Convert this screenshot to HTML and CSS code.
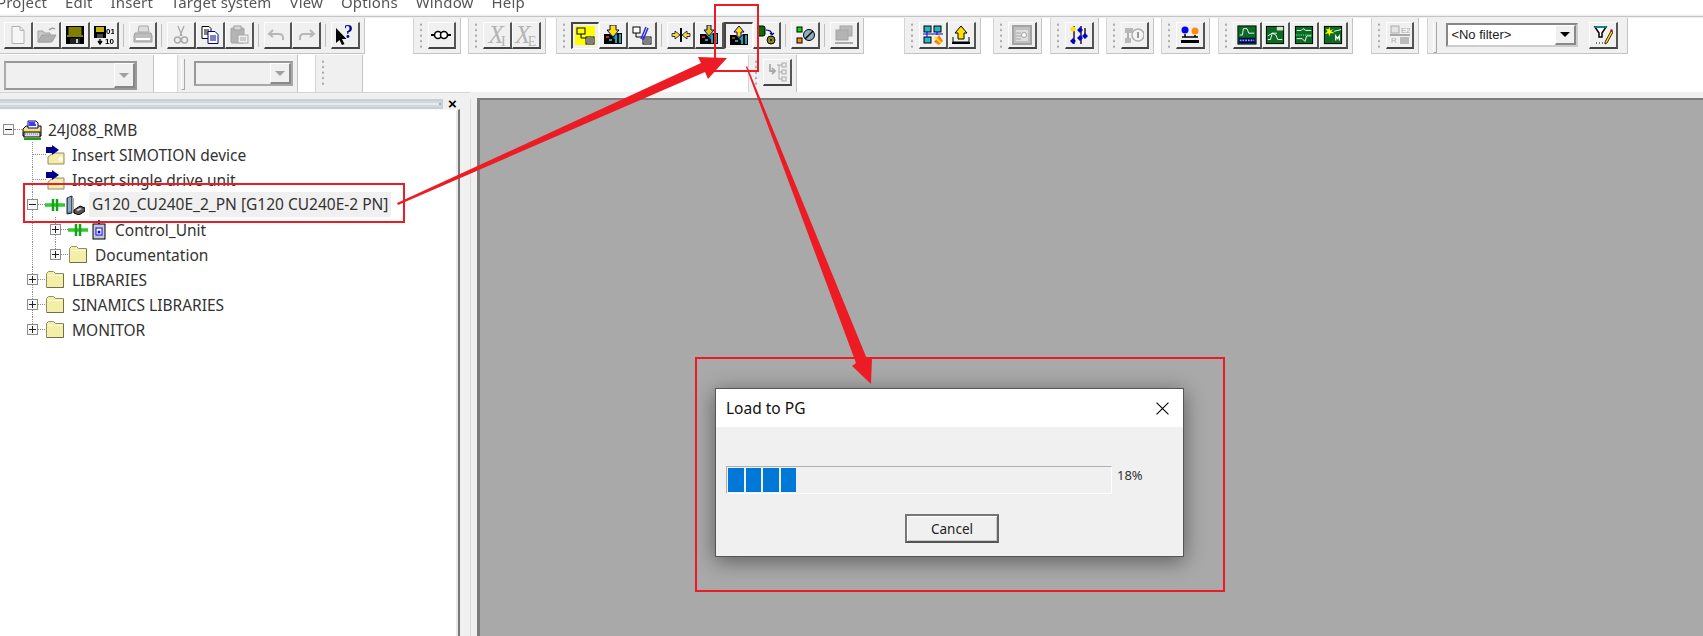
FILE: index.html
```html
<!DOCTYPE html>
<html lang="en">
<head>
<meta charset="utf-8">
<title>Load to PG</title>
<link rel="stylesheet" href="styles.css">
</head>
<body>
<svg class="defs" aria-hidden="true">
  <symbol id="device" viewBox="0 0 20 20">
    <path d="M1 9h6l3 3 3-3 1-1h5v11H1z" fill="#000"/>
    <path d="M10 13l4-4v9h-2v-4z" fill="#17a5b5"/>
    <rect x="12" y="10" width="2" height="8" fill="#17a5b5"/>
    <rect x="16" y="9" width="2" height="9" fill="#17a5b5"/>
    <rect x="3" y="11" width="3" height="2" fill="#c22"/>
    <rect x="6" y="14" width="3" height="2" fill="#17a5b5"/>
  </symbol>
  <symbol id="folder" viewBox="0 0 20 19">
    <path d="M1.500 17.500V3.500l2-2h5l2 2h8v14z" fill="#f5eea6" stroke="#8f8f68"/>
    <path d="M2.500 5.500h15" stroke="#fffbd8"/>
    <path d="M18.500 4v13.500H2" fill="none" stroke="#6e6e50"/>
  </symbol>
  <symbol id="insert" viewBox="0 0 20 20">
    <path d="M7 8h11v11H2V12z" fill="#f6ecaa" stroke="#8f8f68"/>
    <path d="M0 2h6V0l7 5-7 5V8H0z" fill="#00008b"/>
    <path d="M12 14l3-3 2 3-2 3z" fill="#fff"/>
  </symbol>
  <symbol id="link" viewBox="0 0 20 12">
    <path d="M0 6h20" stroke="#2ecb2e" stroke-width="3.500"/>
    <path d="M8 0v12M12 0v12" stroke="#16a016" stroke-width="2.500"/>
  </symbol>
  <symbol id="trend" viewBox="0 0 22 22">
    <rect x="1" y="1" width="20" height="20" fill="#000"/>
    <rect x="2" y="2" width="18" height="18" fill="#0a6b22"/>
  </symbol>
</svg>

<div class="app">
  <nav class="menu">
    <span class="menu-first">Project</span><span>Edit</span><span>Insert</span><span>Target system</span><span>View</span><span>Options</span><span>Window</span><span>Help</span>
  </nav>
  <div class="rule"></div>

  <div class="toolrow">
    <div class="tb tb-flush">
      <span class="btn"><svg class="ic" viewBox="0 0 20 20"><path d="M4 1.500h8l4 4v13H4z" fill="#f6f6f6" stroke="#b0b0b0"/><path d="M12 1.500v4h4" fill="none" stroke="#b0b0b0"/></svg></span>
      <span class="btn"><svg class="ic" viewBox="0 0 20 20"><path d="M1 17V6h5l1 2h6v9z" fill="#c9c9c9" stroke="#a2a2a2"/><path d="M1 17l4-7h14l-4 7z" fill="#b0b0b0" stroke="#a2a2a2"/><path d="M12 5q3-3 6-1" fill="none" stroke="#a2a2a2" stroke-width="1.400"/></svg></span>
      <span class="btn"><svg class="ic" viewBox="0 0 20 20"><rect x="1" y="1" width="18" height="18" fill="#000"/><rect x="3.500" y="2" width="13" height="8" fill="#808000"/><rect x="2" y="10" width="16" height="2" fill="#808000"/><rect x="5" y="13" width="10" height="6" fill="#222"/><rect x="11" y="14" width="2" height="4" fill="#ccc"/></svg></span>
      <span class="btn"><svg class="ic" viewBox="0 0 20 20"><rect x="0" y="1" width="12" height="12" fill="#000"/><rect x="2" y="2" width="8" height="5" fill="#c8b400"/><rect x="3" y="9" width="6" height="4" fill="#444"/><text x="12" y="9" class="digits">01</text><text x="11" y="19" class="digits">10</text><path d="M6 14v4M4 16l2 3 2-3" fill="none" stroke="#000" stroke-width="1.400"/></svg></span>
      <span class="sep"></span>
      <span class="btn"><svg class="ic" viewBox="0 0 20 20"><path d="M6 1h9l1 6H5z" fill="#ddd" stroke="#a8a8a8"/><path d="M2 8h16l1 3v6H1v-6z" fill="#bdbdbd" stroke="#a0a0a0"/><path d="M3 14h14" stroke="#fff" stroke-width="2"/></svg></span>
      <span class="sep"></span>
      <span class="btn"><svg class="ic" viewBox="0 0 20 20"><path d="M7 1l4 10M13 1L9 11" stroke="#aaa" stroke-width="1.300" fill="none"/><circle cx="6.500" cy="15" r="3" fill="none" stroke="#aaa" stroke-width="1.500"/><circle cx="13.500" cy="15" r="3" fill="none" stroke="#aaa" stroke-width="1.500"/></svg></span>
      <span class="btn"><svg class="ic" viewBox="0 0 20 20"><path d="M2 1.500h7l2 2v10H2z" fill="#fff" stroke="#000"/><path d="M4 5h5M4 7h5M4 9h5" stroke="#000"/><path d="M8 6.500h7l3 3v9H8z" fill="#fff" stroke="#00008b"/><path d="M10 11h6M10 13h6M10 15h6" stroke="#00008b" stroke-width="1.200"/></svg></span>
      <span class="btn"><svg class="ic" viewBox="0 0 20 20"><rect x="2" y="3" width="13" height="15" rx="1" fill="#b4b4b4" stroke="#a0a0a0"/><rect x="5" y="1" width="7" height="4" fill="#d8d8d8" stroke="#a0a0a0"/><rect x="9" y="10" width="10" height="8" fill="#eee" stroke="#a8a8a8"/><path d="M11 13h6M11 15h6" stroke="#aaa"/></svg></span>
      <span class="sep"></span>
      <span class="btn"><svg class="ic" viewBox="0 0 20 20"><path d="M6 5L2 9l4 3M3 9h9q4 0 4 4v2" fill="none" stroke="#b8b8b8" stroke-width="2"/></svg></span>
      <span class="btn"><svg class="ic" viewBox="0 0 20 20"><path d="M14 5l4 4-4 3M17 9H8q-4 0-4 4v2" fill="none" stroke="#b8b8b8" stroke-width="2"/></svg></span>
      <span class="sep"></span>
      <span class="btn"><svg class="ic" viewBox="0 0 20 20"><path d="M1 3v15l3.500-3 2.500 5 2.500-1-2.500-5h4.500z" fill="#000"/><text x="9" y="13" class="qmark">?</text></svg></span>
    </div>

    <div class="tb gap-48">
      <span class="grip"></span>
      <span class="btn"><svg class="ic" viewBox="0 0 20 20"><path d="M0 10h3M17 10h3" stroke="#000" stroke-width="2"/><circle cx="7" cy="10" r="3.500" fill="#fff" stroke="#000" stroke-width="1.600"/><circle cx="13" cy="10" r="3.500" fill="#fff" stroke="#000" stroke-width="1.600"/></svg></span>
    </div>

    <div class="tb gap-7">
      <span class="grip"></span>
      <span class="btn"><span class="xsym">X<sub>I</sub></span></span>
      <span class="btn"><span class="xsym">X<sub>E</sub></span></span>
    </div>

    <div class="tb gap-10">
      <span class="grip"></span>
      <span class="btn btn-down"><svg class="ic" viewBox="0 0 20 20"><rect width="20" height="19" fill="#ffff00"/><rect x="2" y="2" width="8" height="6" fill="#ffff00" stroke="#000"/><path d="M6 8v4h6" fill="none" stroke="#000"/><rect x="11" y="11" width="8" height="7" fill="#fff" stroke="#000"/><path d="M13 12v5M15 12v5M17 12v5" stroke="#000"/></svg></span>
      <span class="btn"><svg class="ic" viewBox="0 0 20 20"><use href="#device"/><path d="M7 0h6v5h3l-6 7-6-7h3z" fill="#ffe000" stroke="#00008b"/></svg></span>
      <span class="btn"><svg class="ic" viewBox="0 0 20 20"><rect x="1" y="2" width="7" height="6" fill="#fff" stroke="#000"/><path d="M4 8v4h6" stroke="#000" fill="none"/><rect x="11" y="12" width="8" height="7" fill="#fff" stroke="#000"/><path d="M13 13v5M15 13v5M17 13v5" stroke="#000"/><path d="M9 14L14 2M11 15L16 3" stroke="#2a2ae0" stroke-width="1.500"/></svg></span>
      <span class="sep"></span>
      <span class="btn"><svg class="ic" viewBox="0 0 20 20"><path d="M10 3v14" stroke="#000" stroke-width="2"/><path d="M1 8.500h3V6l5 4-5 4v-2.500H1zM19 8.500h-3V6l-5 4 5 4v-2.500h3z" fill="#ffe000" stroke="#00008b" stroke-width=".8"/></svg></span>
      <span class="btn"><svg class="ic" viewBox="0 0 20 20"><use href="#device"/><path d="M8 0h4v5h3l-5 6-5-6h3z" fill="#d8c800" stroke="#00008b"/></svg></span>
      <span class="btn btn-down"><svg class="ic" viewBox="0 0 20 20"><use href="#device"/><path d="M10 0l5 6h-3v5H8V6H5z" fill="#ffe000" stroke="#00008b"/></svg></span>
      <span class="btn"><svg class="ic" viewBox="0 0 20 20"><rect x="0" y="1" width="8" height="10" rx="2" fill="#0a6a0a" stroke="#000"/><path d="M9 5q5 0 6 4M13 8l2 2 2-2" fill="none" stroke="#00008b" stroke-width="1.200"/><circle cx="14" cy="15" r="4" fill="#8a8a10" stroke="#000"/><circle cx="14" cy="15" r="1" fill="#000"/></svg></span>
      <span class="sep"></span>
      <span class="btn"><svg class="ic" viewBox="0 0 20 20"><rect x="2" y="2" width="5" height="5" fill="#00e000" stroke="#000"/><rect x="2" y="13" width="5" height="5" fill="#ff8c10" stroke="#000"/><circle cx="14" cy="10" r="5.500" fill="#8db0c0" stroke="#000"/><path d="M10 14l8-8" stroke="#000" stroke-width="1.500"/></svg></span>
      <span class="sep"></span>
      <span class="btn"><svg class="ic" viewBox="0 0 20 20"><rect x="6" y="1" width="12" height="10" fill="#bbb" stroke="#a4a4a4"/><rect x="2" y="5" width="12" height="10" fill="#b4b4b4" stroke="#a4a4a4"/><path d="M1 18h18" stroke="#aaa" stroke-width="2"/></svg></span>
    </div>

    <div class="tb gap-40">
      <span class="grip"></span>
      <span class="btn"><svg class="ic" viewBox="0 0 20 20"><rect x="1" y="1" width="7" height="6" fill="#2ab5c5" stroke="#000"/><rect x="11" y="1" width="7" height="6" fill="#2ab5c5" stroke="#000"/><rect x="1" y="12" width="7" height="6" fill="#2ab5c5" stroke="#000"/><path d="M0 9h20M4 7v5M14 7v3" stroke="#0000e0"/><path d="M11 17l5-7 4 6-4 4z" fill="#ff7a10"/><path d="M12 12l6 6" stroke="#ffe000" stroke-width="2"/></svg></span>
      <span class="btn"><svg class="ic" viewBox="0 0 20 20"><path d="M2 12v5h16v-5" fill="#f0f0f0" stroke="#000"/><path d="M1 18h18" stroke="#000" stroke-width="2"/><path d="M10 1l6 7h-3v6H7V8H4z" fill="#ffe000" stroke="#000"/></svg></span>
    </div>

    <div class="tb gap-12">
      <span class="grip"></span>
      <span class="btn"><svg class="ic" viewBox="0 0 20 20"><rect x="1" y="1" width="18" height="18" fill="#c0c0c0" stroke="#a4a4a4" stroke-width="2"/><rect x="4" y="5" width="12" height="11" fill="#ddd"/><path d="M4 8h5M4 11h5M4 14h5" stroke="#aaa"/><circle cx="12" cy="10" r="2.500" fill="#fff" stroke="#a0a0a0"/></svg></span>
    </div>

    <div class="tb gap-8">
      <span class="grip"></span>
      <span class="btn"><svg class="ic" viewBox="0 0 20 20"><path d="M5 1v18M12 1v18" stroke="#000" stroke-width="1.300"/><path d="M16 3v9" stroke="#000" stroke-width="1.300"/><circle cx="4" cy="4" r="2.500" fill="#ffe000"/><path d="M11 2l3 3-3 3-3-3zM16 8l3 3-3 3-3-3zM11 10l3 3-3 3-3-3zM4 13l3 3-3 3-3-3z" fill="#0000d0"/></svg></span>
    </div>

    <div class="tb gap-7">
      <span class="grip"></span>
      <span class="btn"><svg class="ic" viewBox="0 0 20 20"><rect x="1" y="3" width="8" height="5" fill="#b8b8b8"/><rect x="1" y="13" width="6" height="5" fill="#b8b8b8"/><path d="M4 8v5" stroke="#b0b0b0" stroke-width="2"/><circle cx="14" cy="10" r="6" fill="#f4f4f4" stroke="#b0b0b0" stroke-width="1.500"/><path d="M14 7v6" stroke="#999" stroke-width="2"/></svg></span>
    </div>

    <div class="tb gap-7">
      <span class="grip"></span>
      <span class="btn"><svg class="ic" viewBox="0 0 20 20"><circle cx="5" cy="5" r="3.500" fill="#0000f0"/><circle cx="15" cy="6" r="3.500" fill="#ff8c10"/><path d="M5 9v3M15 10v2M2 12h16" stroke="#000" stroke-width="1.500"/><rect x="1" y="15" width="18" height="3" fill="#000"/></svg></span>
    </div>

    <div class="tb gap-8">
      <span class="grip"></span>
      <span class="btn"><svg class="ic" viewBox="0 0 22 22"><rect x="1" y="1" width="20" height="20" fill="#0a6b22" stroke="#000"/><rect x="2" y="14" width="18" height="6" fill="#000060"/><path d="M3 11h3l1-7h4l2 5h6" fill="none" stroke="#fff"/><path d="M3 17h16" stroke="#8ad" stroke-width="2" stroke-dasharray="2 1"/></svg></span>
      <span class="btn"><svg class="ic" viewBox="0 0 22 22"><use href="#trend"/><path d="M3 16h3l2-7 4 2 2 5h5M3 12l5-3h5" fill="none" stroke="#fff"/><rect x="13" y="2" width="7" height="4" fill="#ddd"/></svg></span>
      <span class="btn"><svg class="ic" viewBox="0 0 22 22"><use href="#trend"/><path d="M3 6h5l2-2 3 2h6M3 15h6l3 3 2-6h5" fill="none" stroke="#fff"/><path d="M2 11h18" stroke="#9fc" stroke-dasharray="1 1"/></svg></span>
      <span class="btn"><svg class="ic" viewBox="0 0 22 22"><use href="#trend"/><path d="M7 2l1 4 4-2-3 3 4 2-5 0-1 4-1-4-4 1 3-3-2-3 3 1z" fill="#ffff00"/><path d="M12 7l8-2" stroke="#fff"/><path d="M14 17v-5l2 3 2-3v5" fill="none" stroke="#fff" stroke-width="1.300"/></svg></span>
    </div>

    <div class="tb gap-18">
      <span class="grip"></span>
      <span class="btn"><svg class="ic" viewBox="0 0 20 20"><rect x="1" y="1" width="8" height="7" fill="#e4e4e4" stroke="#aaa"/><text x="11" y="8" class="fade">E2</text><path d="M0 10h20" stroke="#a8a8a8" stroke-width="2"/><text x="1" y="18" class="fade">R</text><rect x="10" y="12" width="9" height="7" fill="#bbb"/></svg></span>
    </div>

    <div class="tb tb-filter gap-8">
      <span class="bar"></span>
      <span class="combo combo-filter"><span class="combo-val">&lt;No filter&gt;</span><span class="combo-btn"><i class="arrow arrow-on"></i></span></span>
      <span class="btn"><svg class="ic" viewBox="0 0 20 20"><path d="M2 2h11L9 8v4H6V8z" fill="#fff" stroke="#000" stroke-width="1.500"/><path d="M2 2h11" stroke="#00a0a0" stroke-width="1.500"/><path d="M12 17l6-11 2 1-6 11-2 1z" fill="#ffd800" stroke="#000" stroke-width=".8"/><path d="M17 6l1-2 2 1-1 2z" fill="#d01010"/><path d="M3 18h1M6 18h1M9 18h1" stroke="#000"/></svg></span>
    </div>
  </div>

  <div class="toolrow">
    <div class="tb tb-flush tb-open tb-combo1"><span class="combo combo-a"><span class="combo-val"></span><span class="combo-btn"><i class="arrow"></i></span></span></div>
    <div class="tb tb-open tb-combo2 gap-23"><span class="bar"></span><span class="combo combo-b"><span class="combo-val"></span><span class="combo-btn"><i class="arrow"></i></span></span></div>
    <div class="tb tb-open tb-gripper gap-17"><span class="grip"></span></div>
    <div class="tb tb-open tb-tree gap-385"><span class="grip"></span><span class="btn"><svg class="ic" viewBox="0 0 20 20"><path d="M3 2v7h4M5 6l3 3-3 3" fill="none" stroke="#aaa" stroke-width="1.800"/><path d="M10 3h5M12 3v14M12 10h3M12 17h3" stroke="#aaa" fill="none"/><rect x="15" y="1" width="4" height="4" fill="#eee" stroke="#aaa"/><rect x="15" y="8" width="4" height="4" fill="#eee" stroke="#aaa"/><rect x="15" y="15" width="4" height="4" fill="#eee" stroke="#aaa"/></svg></span></div>
  </div>

  <div class="band"></div>

  <main class="main">
    <aside class="dock">
      <div class="dock-head"><span class="dock-bars"></span><span class="dock-x">×</span></div>
      <div class="tree">
        <div class="row lv-root">
          <span class="exp exp-open"></span><span class="dash dash-root"></span>
          <svg class="tree-ic" viewBox="0 0 20 20"><path d="M1 9l3-3h15v10H1z" fill="#f3e27a" stroke="#000"/><path d="M6 8V1h8l2 2v5z" fill="#fff" stroke="#00008b"/><path d="M7 3h6M7 5h7" stroke="#0000e0" stroke-width="1.300"/><rect x="2" y="12" width="16" height="5" fill="#ddd" stroke="#000"/><path d="M3 14h14" stroke="#777" stroke-dasharray="1 1"/><path d="M2 19h17" stroke="#18a018" stroke-width="2"/></svg>
          <span class="label">24J088_RMB</span>
        </div>
        <div class="row lv-1 guide-a">
          <span class="dash dash-item"></span>
          <svg class="tree-ic"><use href="#insert"/></svg>
          <span class="label">Insert SIMOTION device</span>
        </div>
        <div class="row lv-1 guide-a">
          <span class="dash dash-item"></span>
          <svg class="tree-ic"><use href="#insert"/></svg>
          <span class="label">Insert single drive unit</span>
        </div>
        <div class="row lv-1b guide-a">
          <span class="exp exp-open"></span><span class="dash dash-short"></span>
          <svg class="link-ic"><use href="#link"/></svg>
          <svg class="tree-ic" viewBox="0 0 20 20"><path d="M2 3l5-2v17l-5 1z" fill="#3f8f8f" stroke="#224"/><path d="M3 3l3-1v14l-3 1z" fill="#9ab"/><rect x="7" y="3" width="2" height="15" fill="#aaa"/><path d="M9 15l6-4 5 2v3l-6 4-5-2z" fill="#555" stroke="#000"/><path d="M11 15l4-2 2 1-4 2z" fill="#ddd"/></svg>
          <span class="label label-sel">G120_CU240E_2_PN [G120 CU240E-2 PN]</span>
        </div>
        <div class="row lv-2 guide-a guide-b">
          <span class="exp exp-plus"></span><span class="dash dash-mini"></span>
          <svg class="link-ic"><use href="#link"/></svg>
          <svg class="unit-ic" viewBox="0 0 14 20"><path d="M7 0v4" stroke="#444" stroke-width="2"/><rect x="1" y="4" width="12" height="15" fill="#c4c9d4" stroke="#000"/><rect x="4" y="8" width="6" height="7" fill="#fff" stroke="#00f"/><circle cx="7" cy="12" r="1.500" fill="#00f"/></svg>
          <span class="label label-unit">Control_Unit</span>
        </div>
        <div class="row lv-2 guide-a guide-b-end">
          <span class="exp exp-plus"></span><span class="dash dash-mini"></span>
          <svg class="folder-ic"><use href="#folder"/></svg>
          <span class="label label-doc">Documentation</span>
        </div>
        <div class="row lv-1b guide-a">
          <span class="exp exp-plus"></span><span class="dash dash-short"></span>
          <svg class="folder-ic"><use href="#folder"/></svg>
          <span class="label label-doc">LIBRARIES</span>
        </div>
        <div class="row lv-1b guide-a">
          <span class="exp exp-plus"></span><span class="dash dash-short"></span>
          <svg class="folder-ic"><use href="#folder"/></svg>
          <span class="label label-doc">SINAMICS LIBRARIES</span>
        </div>
        <div class="row lv-1b guide-end">
          <span class="exp exp-plus"></span><span class="dash dash-short"></span>
          <svg class="folder-ic"><use href="#folder"/></svg>
          <span class="label label-doc">MONITOR</span>
        </div>
      </div>
    </aside>
    <div class="splitter"></div>
    <section class="workspace">
      <div class="dialog">
        <header class="dialog-title">
          <span>Load to PG</span>
          <svg class="dialog-close" viewBox="0 0 12 12"><path d="M.5.500l11 11M11.500.500l-11 11" stroke="#000" fill="none"/></svg>
        </header>
        <div class="dialog-body">
          <div class="progress-line">
            <div class="progress">
              <span class="seg"></span><span class="seg"></span><span class="seg"></span><span class="seg"></span>
            </div>
            <span class="pct">18%</span>
          </div>
          <button class="cancel" type="button">Cancel</button>
        </div>
      </div>
    </section>
  </main>
</div>

<svg class="marks" viewBox="0 0 1703 636" aria-hidden="true">
  <g fill="none" stroke="#ed1c24" stroke-width="2">
    <rect x="24" y="184" width="380" height="38"/>
    <rect x="715" y="5" width="43" height="66"/>
    <rect x="696" y="358" width="528" height="233"/>
  </g>
  <g fill="#ed1c24">
    <polygon points="397,203 701,63 698,57 727,58 708,79 705,72 398,205"/>
    <polygon points="747,66 867,359 872,358 871,384 852,366 856,363 746,67"/>
  </g>
</svg>
</body>
</html>
```
FILE: styles.css
```css
* { box-sizing: border-box; }
html, body { margin: 0; height: 100%; }
body {
  width: 1703px;
  height: 636px;
  overflow: hidden;
  background: #fff;
  position: relative;
  font-family: "Noto Sans", "Open Sans", sans-serif;
  color: #333;
}
.defs { position: absolute; width: 0; height: 0; }
.app {
  height: 636px;
  display: flex;
  flex-direction: column;
  filter: blur(.35px);
}
.menu {
  height: 14px;
  overflow: hidden;
  display: flex;
  gap: 18px;
  font-size: 15px;
  line-height: 14px;
  color: #555;
  letter-spacing: .15px;
  flex: none;
}
.menu span { margin-top: -5px; }
.menu .menu-first { margin-left: -3px; }
.rule {
  height: 4px;
  flex: none;
  background: #f0f0f0;
  border-bottom: 1px solid #f0f0f0;
  border-top: 1px solid #f4f4f4;
  box-shadow: inset 0 -1px 0 #c4c4c4;
}
.toolrow {
  height: 37px;
  flex: none;
  display: flex;
  align-items: flex-start;
}
.tb {
  height: 36px;
  flex: none;
  display: flex;
  align-items: flex-start;
  background: #f0f0f0;
  padding: 4px 4px 0 3px;
  border-left: 1px solid #d4d4d4;
  border-right: 1px solid #c4c4c4;
  border-bottom: 1px solid #c4c4c4;
}
.tb-flush { border-left: 0; padding-left: 4px; }
.tb-open { height: 37px; border-bottom: 0; }
.gap-7 { margin-left: 7px; }
.gap-8 { margin-left: 8px; }
.gap-10 { margin-left: 10px; }
.gap-12 { margin-left: 12px; }
.gap-17 { margin-left: 17px; }
.gap-18 { margin-left: 18px; }
.gap-23 { margin-left: 23px; }
.gap-40 { margin-left: 40px; }
.gap-48 { margin-left: 48px; }
.gap-385 { margin-left: 385px; }

.grip {
  width: 11px;
  height: 27px;
  flex: none;
  background: radial-gradient(circle at 4px 2.5px, #aaa 0 1px, transparent 1.3px) 0 0 / 11px 5.5px repeat-y;
}
.bar {
  width: 4px;
  height: 31px;
  flex: none;
  border-left: 1px solid #fff;
  border-right: 1px solid #a8a8a8;
  border-bottom: 1px solid #a8a8a8;
  margin-right: 9px;
}
.sep {
  width: 10px;
  height: 27px;
  flex: none;
  background: linear-gradient(#c0c0c0, #c0c0c0) 4px 2px / 1px 23px no-repeat;
}
.btn {
  width: 28.7px;
  height: 27px;
  flex: none;
  display: flex;
  align-items: center;
  justify-content: center;
  background: #f0f0f0;
  border-top: 1px solid #fdfdfd;
  border-left: 1px solid #fdfdfd;
  border-right: 2px solid #555;
  border-bottom: 2px solid #444;
}
.btn-down {
  border-top: 2px solid #444;
  border-left: 2px solid #444;
  border-right: 1px solid #fdfdfd;
  border-bottom: 1px solid #fdfdfd;
}
.ic { width: 20px; height: 20px; display: block; flex: none; }
.digits { font: bold 8px "Liberation Sans", sans-serif; fill: #000; }
.qmark { font: bold 18px "Liberation Serif", serif; fill: #00008b; }
.fade { font: 8px "Liberation Sans", sans-serif; fill: #aaa; }
.xsym {
  font: italic 25px/1 "Liberation Serif", serif;
  color: #b4b4b4;
  white-space: nowrap;
}
.xsym sub { font: 14px/1 "Liberation Serif", serif; vertical-align: -3px; margin-left: -3px; }

.tb-filter { padding-left: 5px; padding-right: 9px; }
.tb-filter .btn { margin-left: 11px; }
.combo {
  display: flex;
  align-items: stretch;
  flex: none;
  border: 2px solid #999;
  border-right-color: #a8a8a8;
  border-bottom-color: #a8a8a8;
  background: #f0f0f0;
}
.combo-filter {
  width: 132px;
  height: 24px;
  margin-top: 1px;
  background: #fff;
  border-color: #888 #ccc #ccc #888;
}
.combo-a { width: 133px; height: 29px; margin-top: 2px; border-color: #999 #999 #999 #aaa; }
.combo-b { width: 99px; height: 25px; margin-top: 2px; }
.combo-val {
  flex: 1;
  font: 13px/20px "Liberation Sans", sans-serif;
  color: #222;
  padding-left: 3px;
  white-space: nowrap;
}
.combo-btn {
  width: 21px;
  display: flex;
  align-items: center;
  justify-content: center;
  background: #f0f0f0;
  border-top: 1px solid #fff;
  border-left: 1px solid #fff;
  border-right: 2px solid #888;
  border-bottom: 2px solid #888;
}
.arrow {
  width: 0;
  height: 0;
  border-left: 5px solid transparent;
  border-right: 5px solid transparent;
  border-top: 5px solid #a0a0a0;
}
.arrow-on { border-top-color: #000; }
.tb-combo1 { width: 154px; }
.tb-combo2 { width: 121px; }
.tb-gripper { width: 48px; }
.tb-tree { width: 49px; }

.band {
  height: 6px;
  flex: none;
  background: linear-gradient(90deg, #d4d4d4 470px, #f0f0f0 470px) 0 0 / 100% 1px no-repeat, #f0f0f0;
}
.main { flex: 1; display: flex; min-height: 0; }
.dock {
  width: 470px;
  flex: none;
  background: #f0f0f0;
  display: flex;
  flex-direction: column;
  padding-right: 10px;
}
.dock-head {
  height: 11px;
  flex: none;
  display: flex;
  align-items: center;
}
.dock-bars {
  width: 443px;
  height: 10px;
  flex: none;
  background: #e8eaec;
  border: 2px solid #c3d0de;
  border-left: 0;
  box-shadow: inset 0 2px 0 #d4d8dc, inset 0 -2px 0 #d4d8dc, inset -2px 0 0 #aaa;
}
.dock-x {
  margin-left: 5px;
  font: bold 15px/10px "Liberation Sans", sans-serif;
  color: #000;
}
.tree {
  flex: 1;
  background: #fff;
  border-top: 1px solid #f6f6f6;
  border-right: 2px solid #777;
  box-shadow: inset -2px 0 0 #e8e8e8;
  padding-top: 7px;
}
.row {
  height: 25px;
  display: flex;
  align-items: center;
  position: relative;
  font-size: 15.5px;
  white-space: nowrap;
}
.lv-root { padding-left: 3px; }
.lv-1 { padding-left: 33px; }
.lv-1b { padding-left: 27px; }
.lv-2 { padding-left: 50px; }
.guide-a::before, .guide-end::before, .guide-b::after, .guide-b-end::after {
  content: "";
  position: absolute;
  top: 0;
  bottom: 0;
  left: 32px;
  border-left: 1px dotted #8c8c8c;
}
.guide-end::before { bottom: 50%; }
.guide-b::after, .guide-b-end::after { left: 55px; }
.guide-b-end::after { bottom: 50%; }
.lv-1b .exp, .lv-2 .exp { position: relative; z-index: 1; }
.exp {
  width: 11px;
  height: 11px;
  flex: none;
  border: 1px solid #8c8c8c;
  background:
    linear-gradient(#222, #222) center / 7px 1px no-repeat,
    #f8f8f8;
}
.exp-plus {
  background:
    linear-gradient(#222, #222) center / 7px 1px no-repeat,
    linear-gradient(#222, #222) center / 1px 7px no-repeat,
    #f8f8f8;
}
.dash { height: 0; border-top: 1px dotted #8c8c8c; flex: none; }
.dash-root { width: 8px; }
.dash-item { width: 13px; }
.dash-short { width: 7px; }
.dash-mini { width: 7px; }
.tree-ic { width: 20px; height: 20px; flex: none; }
.link-ic { width: 20px; height: 12px; flex: none; }
.unit-ic { width: 14px; height: 20px; flex: none; margin-left: 4px; }
.folder-ic { width: 20px; height: 19px; flex: none; }
.label { margin-left: 6px; }
.label-sel {
  margin-left: 4px;
  width: 302px;
  height: 25px;
  line-height: 24px;
  padding-left: 3px;
  background: #f0f0f0;
}
.label-unit { margin-left: 9px; }
.label-doc { margin-left: 7px; }

.splitter {
  width: 7px;
  flex: none;
  background: linear-gradient(90deg, #dcdcdc 0 1px, #f0f0f0 1px);
}
.workspace {
  flex: 1;
  background: #a9a9a9;
  border-top: 2px solid #7c7c7c;
  border-left: 3px solid #7c7c7c;
  position: relative;
}
.dialog {
  position: absolute;
  left: 235px;
  top: 288px;
  width: 469px;
  height: 169px;
  display: flex;
  flex-direction: column;
  background: #f0f0f0;
  border: 1px solid #555;
  box-shadow: 0 4px 20px rgba(0, 0, 0, .45);
}
.dialog-title {
  height: 38px;
  flex: none;
  background: #fff;
  display: flex;
  align-items: center;
  justify-content: space-between;
  padding: 0 14px 0 10px;
  font-size: 15.5px;
  color: #111;
}
.dialog-close { width: 13px; height: 13px; display: block; }
.dialog-body {
  flex: 1;
  display: flex;
  flex-direction: column;
  padding: 39px 0 0 10px;
}
.progress-line { display: flex; gap: 5px; }
.progress {
  width: 386px;
  height: 28px;
  flex: none;
  display: flex;
  gap: 2px;
  padding: 1px;
  background: #f0f0f0;
  border-top: 1px solid #b0b0b0;
  border-left: 1px solid #b0b0b0;
  border-right: 1px solid #fff;
  border-bottom: 1px solid #fff;
}
.seg { width: 15.5px; height: 24px; background: #0078d7; }
.pct {
  font-size: 13px;
  line-height: 18px;
  color: #333;
}
.cancel {
  width: 94px;
  height: 29px;
  align-self: flex-start;
  margin: 20px 0 0 179px;
  padding: 0;
  background: #f0f0f0;
  border: 2px solid #777;
  border-right-color: #666;
  border-bottom-color: #555;
  box-shadow: inset 1px 1px 0 #fff, inset -1px -1px 0 #c8c8c8;
  font: 13.5px "Noto Sans", sans-serif;
  color: #222;
}
.marks {
  position: absolute;
  left: 0;
  top: 0;
  width: 1703px;
  height: 636px;
  pointer-events: none;
}
```
